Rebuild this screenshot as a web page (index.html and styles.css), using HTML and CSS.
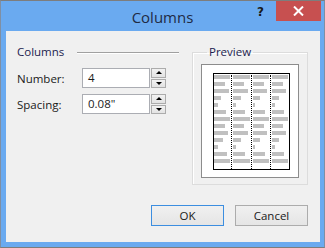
FILE: index.html
```html
<!DOCTYPE html>
<html>
<head>
<meta charset="utf-8">
<link rel="stylesheet" href="styles.css">
</head>
<body>
<div class="window">
  <div class="titlebar">
    <div class="title">Columns</div>
    <div class="controls">
      <span class="help">?</span>
      <span class="close">
        <svg width="11" height="10" viewBox="0 0 11 10"><path d="M1 0.5 L10 9.5 M10 0.5 L1 9.5" stroke="#fff" stroke-width="2"/></svg>
      </span>
    </div>
  </div>
  <div class="client">
    <div class="main">
      <div class="left">
        <div class="section-head">
          <span class="caption">Columns</span>
          <span class="rule"></span>
        </div>
        <div class="row">
          <span class="label">Number:</span>
          <span class="input">4</span>
          <span class="spin"><span class="spin-btn"><i class="tri up"></i></span><span class="spin-btn"><i class="tri down"></i></span></span>
        </div>
        <div class="row row2">
          <span class="label">Spacing:</span>
          <span class="input">0.08"</span>
          <span class="spin"><span class="spin-btn"><i class="tri up"></i></span><span class="spin-btn"><i class="tri down"></i></span></span>
        </div>
      </div>
      <fieldset class="group">
        <legend class="caption">Preview</legend>
        <div class="preview">
          <div class="page">
            <div class="col"><i style="width:100%"></i><i style="width:70%"></i><i style="width:90%"></i><i style="width:45%"></i><i style="width:22%"></i><i style="width:75%"></i><i style="width:100%"></i><i style="width:65%"></i><i style="width:88%"></i><i style="width:55%"></i><i style="width:25%"></i><i style="width:80%"></i><i style="width:100%"></i></div>
            <div class="col"><i style="width:100%"></i><i style="width:68%"></i><i style="width:90%"></i><i style="width:45%"></i><i style="width:18%"></i><i style="width:75%"></i><i style="width:100%"></i><i style="width:68%"></i><i style="width:90%"></i><i style="width:45%"></i><i style="width:18%"></i><i style="width:75%"></i><i style="width:100%"></i></div>
            <div class="col"><i style="width:100%"></i><i style="width:68%"></i><i style="width:90%"></i><i style="width:45%"></i><i style="width:18%"></i><i style="width:75%"></i><i style="width:100%"></i><i style="width:68%"></i><i style="width:90%"></i><i style="width:45%"></i><i style="width:18%"></i><i style="width:75%"></i><i style="width:100%"></i></div>
            <div class="col"><i style="width:100%"></i><i style="width:68%"></i><i style="width:90%"></i><i style="width:45%"></i><i style="width:18%"></i><i style="width:75%"></i><i style="width:100%"></i><i style="width:68%"></i><i style="width:90%"></i><i style="width:45%"></i><i style="width:18%"></i><i style="width:75%"></i><i style="width:100%"></i></div>
          </div>
        </div>
      </fieldset>
    </div>
    <div class="buttons">
      <button class="btn default">OK</button>
      <button class="btn">Cancel</button>
    </div>
  </div>
</div>
</body>
</html>
```
FILE: styles.css
```css
* { box-sizing: border-box; }
html, body { margin: 0; padding: 0; }
body {
  width: 325px;
  height: 248px;
  font-family: "Open Sans", "Noto Sans", sans-serif;
  font-size: 11.5px;
  color: #1a1a1a;
}
.window {
  width: 325px;
  height: 248px;
  background: #6aaaf0;
  border: 1px solid #7f8fa4;
  border-top-color: #7d7d7d;
  border-bottom-color: #7d7d7d;
  display: flex;
  flex-direction: column;
}
.titlebar {
  height: 30px;
  display: grid;
  grid-template-columns: 1fr auto 1fr;
  align-items: start;
}
.title {
  grid-column: 2;
  font-size: 15px;
  line-height: 16px;
  padding-top: 8px;
  color: #1f2a44;
}
.controls {
  grid-column: 3;
  justify-self: end;
  display: flex;
  align-items: flex-start;
  margin-right: 3px;
}
.help {
  font-family: "DejaVu Sans", sans-serif;
  font-weight: bold;
  font-size: 12px;
  line-height: 14px;
  color: #1a1a1a;
  margin-top: 4px;
  margin-right: 12px;
}
.close {
  width: 45px;
  height: 20px;
  background: #c75050;
  display: flex;
  align-items: center;
  justify-content: center;
}
.client {
  flex: 1;
  margin: 0 4px 5px 5px;
  background: #f0f0f0;
  padding: 13px 12px 0 11px;
  display: flex;
  flex-direction: column;
}
.main {
  display: flex;
  align-items: flex-start;
}
.left {
  width: 163px;
  margin-right: 13px;
}
.section-head {
  display: flex;
  align-items: center;
  height: 16px;
}
.caption {
  color: #1d1d4f;
  line-height: 16px;
}
.rule {
  flex: 1;
  height: 2px;
  border-top: 1px solid #a0a0a0;
  border-bottom: 1px solid #ffffff;
  margin-left: 13px;
  margin-top: 1px;
}
.row {
  display: flex;
  align-items: center;
  margin-top: 8px;
  height: 20px;
}
.row2 { margin-top: 6px; }
.label {
  width: 65px;
}
.input {
  width: 68px;
  height: 20px;
  border: 1px solid #abadb3;
  background: #fff;
  padding: 0 5px;
  line-height: 18px;
}
.spin {
  width: 15px;
  height: 20px;
  margin-left: 1px;
  display: flex;
  flex-direction: column;
  gap: 1px;
}
.spin-btn {
  flex: 1;
  border: 1px solid #acacac;
  background: linear-gradient(#f2f2f2, #e3e3e3);
  display: flex;
  align-items: center;
  justify-content: center;
}
.tri {
  width: 0;
  height: 0;
  border-left: 3px solid transparent;
  border-right: 3px solid transparent;
}
.tri.up { border-bottom: 3px solid #000; }
.tri.down { border-top: 3px solid #000; }
.group {
  margin: 0;
  width: 116px;
  height: 141px;
  border: 1px solid #dcdcdc;
  padding: 4px 8px 6px 8px;
  box-shadow: inset 1px 1px 0 #fff;
}
.group legend {
  padding: 0 2px;
  margin-left: 6px;
}
.preview {
  width: 98px;
  height: 114px;
  background: #fff;
  border: 1px solid #8c8c8c;
  padding: 8px 0 0 11px;
}
.page {
  width: 77px;
  height: 97px;
  border: 1px solid #000;
  display: flex;
  padding-top: 1px;
}
.col {
  flex: 1;
  display: flex;
  flex-direction: column;
  gap: 3px;
  padding: 0 1px;
}
.col + .col {
  border-left: 1px dotted #000;
}
.col:first-child { padding-left: 0; }
.col i {
  display: block;
  height: 4px;
  background: #c0c0c0;
}
.buttons {
  margin-top: 20px;
  display: flex;
  justify-content: flex-end;
  gap: 11px;
}
.btn {
  width: 73px;
  height: 21px;
  font-family: inherit;
  font-size: inherit;
  color: #1a1a1a;
  border: 1px solid #acacac;
  background: linear-gradient(#f0f0f0, #e5e5e5);
  padding: 0;
}
.btn.default {
  border-color: #3c8ee0;
}
```
